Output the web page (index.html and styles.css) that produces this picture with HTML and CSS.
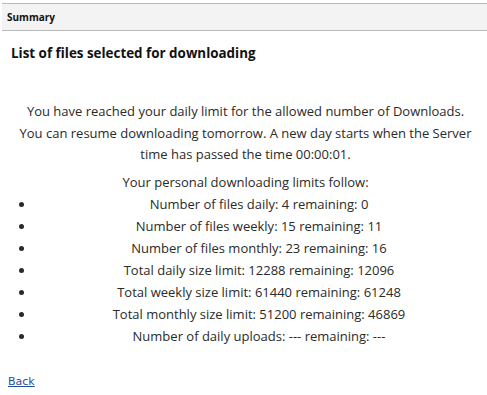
FILE: index.html
```html
<!DOCTYPE html>
<html lang="en">
<head>
    <meta charset="UTF-8">
    <title>Summary</title>
    <link rel="stylesheet" href="styles.css">
</head>
<body>
    <div class="panel">
        <div class="panelHeader">Summary</div>
        <h3 class="title">List of files selected for downloading</h3>

        <div class="limits">
            <p class="notice">
                You have reached your daily limit for the allowed number of Downloads.<br>
                You can resume downloading tomorrow. A new day starts when the Server<br>
                time has passed the time 00:00:01.
            </p>
            <p class="follow">Your personal downloading limits follow:</p>
            <ul class="limitList">
                <li>Number of files daily: 4 remaining: 0</li>
                <li>Number of files weekly: 15 remaining: 11</li>
                <li>Number of files monthly: 23 remaining: 16</li>
                <li>Total daily size limit: 12288 remaining: 12096</li>
                <li>Total weekly size limit: 61440 remaining: 61248</li>
                <li>Total monthly size limit: 51200 remaining: 46869</li>
                <li>Number of daily uploads: --- remaining: ---</li>
            </ul>
        </div>

        <a class="back" href="#">Back</a>
    </div>
</body>
</html>
```

FILE: styles.css
```css
body {
    margin: 0;
    font-family: "Open Sans", "Noto Sans", sans-serif;
    color: #2a2a2a;
    background: #fff;
}
.panel {
    padding-top: 3px;
}
.panelHeader {
    margin-left: 2px;
    height: 26px;
    line-height: 26px;
    padding-left: 5px;
    background-color: #f3f3f3;
    border-top: 1px solid #bbb;
    border-bottom: 1px solid #bbb;
    font-size: 10px;
    font-weight: bold;
    color: #111;
}
.title {
    margin: 13px 0 0 11px;
    font-size: 13.4px;
    font-weight: bold;
    color: #111;
}
.limits {
    margin: 39px 4px 0 8px;
    font-size: 13px;
    text-align: center;
}
.notice {
    margin: 0;
    line-height: 21.6px;
}
.follow {
    margin: 5px 0 0 0;
    line-height: 22px;
}
.limitList {
    margin: 0;
    padding-left: 27px;
}
.limitList li {
    line-height: 22px;
}
.back {
    display: inline-block;
    margin: 28px 0 0 8px;
    font-family: "DejaVu Sans", Verdana, sans-serif;
    font-size: 11px;
    color: #1f4e9e;
}
```
